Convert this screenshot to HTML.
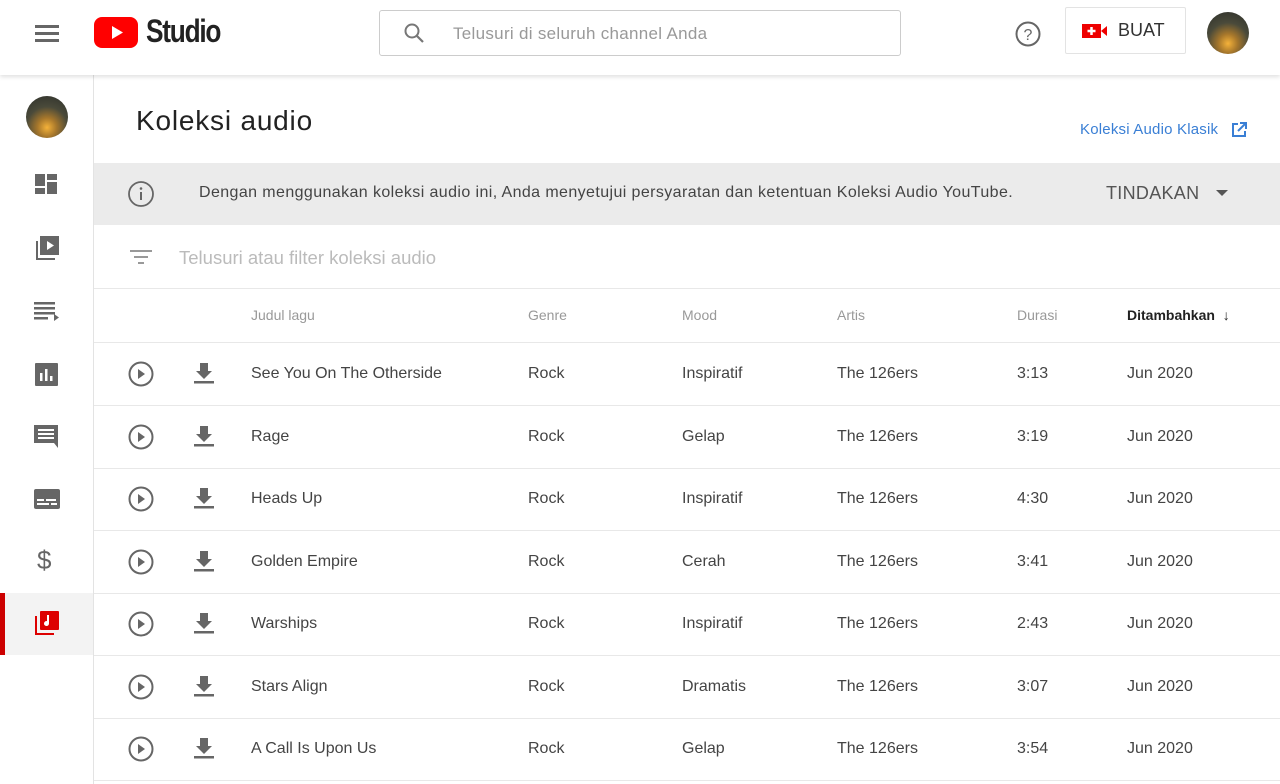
<!DOCTYPE html>
<html><head><meta charset="utf-8"><style>
*{margin:0;padding:0;box-sizing:border-box}
body{width:1280px;height:784px;overflow:hidden;background:#fff;font-family:"Liberation Sans",sans-serif;color:#333;position:relative}
.hdr{position:absolute;left:0;top:0;width:1280px;height:75px;background:#fff;box-shadow:0 2px 4px rgba(0,0,0,.12);z-index:2}
.side{position:absolute;left:0;top:75px;width:94px;height:709px;border-right:1px solid #e3e3e3;background:#fff}
.ic{position:absolute;left:33px}
.abs{position:absolute}
.row{position:absolute;left:94px;width:1186px;height:63px;border-bottom:1px solid #e8e8e8}
.row span{position:absolute;top:22px;font-size:16px;color:#444}
.th span{position:absolute;top:17px;font-size:14px;color:#999}
.avatar{border-radius:50%;background:radial-gradient(circle at 50% 75%,#f4b23a 0,#a7772b 25%,#4a4a3a 55%,#2c2e2a 100%)}
</style></head><body>
<div class="hdr">
 <div class="abs" style="left:35px;top:25px;width:24px;height:3px;background:#666;box-shadow:0 7px 0 #666,0 14px 0 #666"></div>
 <div class="abs" style="left:94px;top:17px;width:44px;height:31px;background:#f00;border-radius:8px"></div>
 <svg class="abs" style="left:94px;top:17px" width="44" height="31"><path d="M18 9 L29 15.5 L18 22Z" fill="#fff"/></svg>
 <div class="abs" style="left:146px;top:13px;font-size:32px;font-weight:bold;letter-spacing:-1.5px;color:#222;transform:scaleX(.82);transform-origin:left">Studio</div>
 <div class="abs" style="left:379px;top:10px;width:522px;height:46px;border:1px solid #ccc;border-radius:3px"></div>
 <svg class="abs" style="left:403px;top:22px" width="22" height="22"><circle cx="9" cy="9" r="6.5" fill="none" stroke="#777" stroke-width="2"/><path d="M14 14L20 20" stroke="#777" stroke-width="2.2"/></svg>
 <div class="abs" style="left:453px;top:24px;font-size:17px;color:#999;letter-spacing:.3px">Telusuri di seluruh channel Anda</div>
 <svg class="abs" style="left:1014px;top:20px" width="28" height="28"><circle cx="14" cy="14" r="11.5" fill="none" stroke="#666" stroke-width="2"/><text x="14" y="20" text-anchor="middle" font-size="16" fill="#666" font-family="Liberation Sans">?</text></svg>
 <div class="abs" style="left:1065px;top:7px;width:121px;height:47px;border:1px solid #e3e3e3;border-radius:2px"></div>
 <svg class="abs" style="left:1082px;top:23px" width="26" height="16"><rect x="0" y="1" width="19" height="14" fill="#e00"/><path d="M19 8L25 3V13Z" fill="#e00"/><path d="M9.5 4v8M5.5 8h8" stroke="#fff" stroke-width="2.5"/></svg>
 <div class="abs" style="left:1118px;top:20px;font-size:18px;color:#333;font-weight:500">BUAT</div>
 <div class="abs avatar" style="left:1207px;top:12px;width:42px;height:42px"></div>
</div>
<div class="side">
 <div class="abs avatar" style="left:26px;top:21px;width:42px;height:42px"></div>
 <svg class="ic" style="top:97px" width="26" height="26" fill="#666"><rect x="2" y="2" width="10" height="12"/><rect x="14" y="2" width="10" height="6"/><rect x="14" y="10" width="10" height="12"/><rect x="2" y="16" width="10" height="6"/></svg>
 <svg class="ic" style="top:160px" width="28" height="28" fill="#666"><rect x="7" y="1" width="19" height="19"/><path d="M3 6v19h19v-2H5V6z"/><path d="M14 6l7 4.5-7 4.5z" fill="#fff"/></svg>
 <svg class="ic" style="top:224px" width="28" height="26" fill="#666"><rect x="1" y="3" width="21" height="2.5"/><rect x="1" y="8" width="21" height="2.5"/><rect x="1" y="13" width="21" height="2.5"/><rect x="1" y="18" width="14" height="2.5"/><path d="M21 15l5 3.5-5 3.5z"/></svg>
 <svg class="ic" style="top:286px" width="26" height="26" fill="#666"><rect x="2" y="2" width="23" height="23" rx="1"/><g fill="#fff"><rect x="7" y="12" width="2.5" height="8"/><rect x="12" y="8" width="2.5" height="12"/><rect x="17" y="15" width="2.5" height="5"/></g></svg>
 <svg class="ic" style="top:348px" width="28" height="28" fill="#666"><path d="M1 2h24v18H1z M21 20l4 5v-5z"/><g fill="#fff"><rect x="5" y="6" width="16" height="2"/><rect x="5" y="10" width="16" height="2"/><rect x="5" y="14" width="16" height="2"/></g></svg>
 <svg class="ic" style="top:412px" width="28" height="24" fill="#666"><rect x="1" y="2" width="26" height="20" rx="2"/><g fill="#fff"><rect x="4" y="12" width="7" height="2"/><rect x="13" y="12" width="10" height="2"/><rect x="4" y="16" width="12" height="2"/><rect x="18" y="16" width="6" height="2"/></g></svg>
 <div class="abs" style="left:37px;top:470px;font-size:26px;color:#666">$</div>
 <div class="abs" style="left:0;top:518px;width:93px;height:62px;background:#f3f3f3"></div>
 <div class="abs" style="left:0;top:518px;width:5px;height:62px;background:#c00"></div>
 <svg class="ic" style="top:535px" width="28" height="28" fill="#d00"><rect x="7" y="1" width="19" height="19" rx="1"/><path d="M2 6v19h19v-2H4V6z"/><path d="M16 5v8.5a2.5 2.5 0 1 1-2-2.4V5z" fill="#fff"/></svg>
</div>
<div class="abs" style="left:136px;top:105px;font-size:28px;color:#222;letter-spacing:.8px">Koleksi audio</div>
<div class="abs" style="left:1080px;top:121px;font-size:15px;color:#3a7fd5;letter-spacing:.2px">Koleksi Audio Klasik</div>
<svg class="abs" style="left:1231px;top:122px" width="16" height="16"><path d="M7 2H2v12h12V9" fill="none" stroke="#3a7fd5" stroke-width="2"/><path d="M9 1h6v6M15 1L7 9" fill="none" stroke="#3a7fd5" stroke-width="2"/></svg>
<div class="abs" style="left:94px;top:163px;width:1186px;height:62px;background:#ebebeb"></div>
<svg class="abs" style="left:127px;top:180px" width="28" height="28"><circle cx="14" cy="14" r="12" fill="none" stroke="#666" stroke-width="1.8"/><rect x="13" y="12" width="2" height="8" fill="#666"/><circle cx="14" cy="8.5" r="1.3" fill="#666"/></svg>
<div class="abs" style="left:199px;top:184px;font-size:16px;color:#444;letter-spacing:.4px">Dengan menggunakan koleksi audio ini, Anda menyetujui persyaratan dan ketentuan Koleksi Audio YouTube.</div>
<div class="abs" style="left:1106px;top:183px;font-size:18px;color:#555;letter-spacing:.3px">TINDAKAN</div>
<svg class="abs" style="left:1216px;top:189px" width="12" height="8"><path d="M0 1h12L6 7z" fill="#555"/></svg>
<div class="abs" style="left:94px;top:225px;width:1186px;height:64px;border-bottom:1px solid #e8e8e8"></div>
<svg class="abs" style="left:130px;top:248px" width="24" height="20" fill="#999"><rect x="0" y="2" width="22" height="2"/><rect x="4" y="8" width="14" height="2"/><rect x="8" y="14" width="6" height="2"/></svg>
<div class="abs" style="left:179px;top:247px;font-size:18.5px;color:#bbb">Telusuri atau filter koleksi audio</div>
<div class="row th" style="top:290px;height:53px">
 <span style="left:157px">Judul lagu</span><span style="left:434px">Genre</span><span style="left:588px">Mood</span><span style="left:743px">Artis</span><span style="left:923px">Durasi</span><span style="left:1033px;color:#222;font-weight:bold">Ditambahkan&nbsp; ↓</span>
</div>
<div id="rows"></div>
<script>
const d=[["See You On The Otherside","Inspiratif","3:13"],["Rage","Gelap","3:19"],["Heads Up","Inspiratif","4:30"],["Golden Empire","Cerah","3:41"],["Warships","Inspiratif","2:43"],["Stars Align","Dramatis","3:07"],["A Call Is Upon Us","Gelap","3:54"]];
let h="";d.forEach((r,i)=>{const t=343+i*62.5;h+=`<div class="row" style="top:${t}px"><svg style="position:absolute;left:33px;top:17px" width="28" height="28"><circle cx="14" cy="14" r="11.5" fill="none" stroke="#666" stroke-width="2"/><path d="M11 9l7 5-7 5z" fill="#666"/></svg><svg style="position:absolute;left:99px;top:18px" width="22" height="24" fill="#666"><path d="M7 2h8v8h4l-8 8-8-8h4z"/><rect x="1" y="20" width="20" height="2.5"/></svg><span style="left:157px">${r[0]}</span><span style="left:434px">Rock</span><span style="left:588px">${r[1]}</span><span style="left:743px">The 126ers</span><span style="left:923px">${r[2]}</span><span style="left:1033px">Jun 2020</span></div>`});
document.getElementById("rows").innerHTML=h;
</script>
</body></html>
